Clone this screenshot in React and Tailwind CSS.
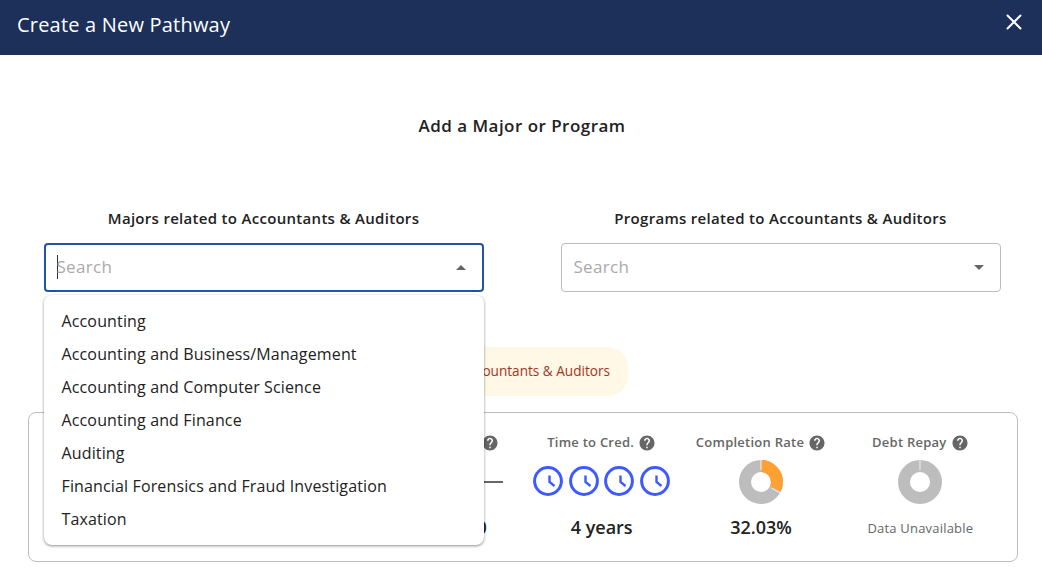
import { X } from 'lucide-react';
import { MdHelp } from 'react-icons/md';

const majors = [
  'Accounting',
  'Accounting and Business/Management',
  'Accounting and Computer Science',
  'Accounting and Finance',
  'Auditing',
  'Financial Forensics and Fraud Investigation',
  'Taxation',
];

function Clock() {
  return (
    <svg width="32" height="32" viewBox="0 0 32 32" fill="none" stroke="#3d5afe" strokeWidth="3">
      <circle cx="16" cy="16" r="13.4" />
      <path d="M17.5 10.5 V17 L22.5 21" strokeWidth="2.4" />
    </svg>
  );
}

function Donut({ percent }) {
  // ring drawn with a thick stroke, r=16 so the hole is about 10px
  const r = 16;
  const len = 2 * Math.PI * r;
  return (
    <svg width="44" height="44" viewBox="0 0 44 44" fill="none" strokeWidth="12">
      <circle cx="22" cy="22" r={r} stroke="#bdbdbd" />
      {percent > 0 && (
        <circle
          cx="22"
          cy="22"
          r={r}
          stroke="#ffa033"
          strokeDasharray={`${(len * percent) / 100} ${len}`}
          transform="rotate(-90 22 22)"
        />
      )}
      <path d="M22 0 V10" stroke="#f2f2f2" strokeWidth="1" />
      {percent > 0 && <path d="M32.4 28 L41.8 33.2" stroke="#f2f2f2" strokeWidth="1" />}
    </svg>
  );
}

function Stat({ label, children, value, note }) {
  return (
    <div className="flex flex-col items-center">
      <div className="flex items-center gap-[4px] h-[18px] text-[13px] font-semibold tracking-[0.25px] text-[#666] whitespace-nowrap">
        <span>{label}</span>
        <MdHelp className="text-[18px] text-[#666]" />
      </div>
      <div className="flex items-center justify-center h-[44px] mt-[8px]">{children}</div>
      {value && <div className="mt-[11px] text-[18px] leading-[24px] font-semibold text-[#222]">{value}</div>}
      {note && <div className="mt-[15px] text-[13px] leading-[18px] tracking-[0.2px] text-[#666]">{note}</div>}
    </div>
  );
}

function SearchBox({ label, open }) {
  return (
    <div className="relative w-[440px]">
      <div className="-mt-[1px] text-center text-[15px] leading-[20px] font-semibold text-[#222] tracking-[0.3px] mb-[15px]">{label}</div>
      <div
        className={
          open
            ? 'flex items-center justify-between h-[49px] rounded-[4px] border-2 border-[#2452a4] pl-[11px] pr-[16px]'
            : 'flex items-center justify-between h-[49px] rounded-[4px] border border-[#bdbdbd] pl-[12px] pr-[16px]'
        }
      >
        <div className="flex items-center text-[17px] tracking-[0.3px] text-[#aaa] -mt-[1px]">
          {open && <span className="w-px h-[24px] bg-[#333] -mr-px" />}
          <span>Search</span>
        </div>
        <span
          className={
            open
              ? 'w-0 h-0 border-x-[5px] border-x-transparent border-b-[5px] border-b-[#666]'
              : 'w-0 h-0 border-x-[5px] border-x-transparent border-t-[5px] border-t-[#666]'
          }
        />
      </div>
      {open && (
        <ul className="absolute z-10 left-0 right-0 top-[86px] bg-white rounded-[8px] py-[9.5px] shadow-[0_1px_3px_rgba(0,0,0,0.45)]">
          {majors.map((m) => (
            <li key={m} className="h-[33px] pl-[18px] flex items-center text-[16px] tracking-[0.14px] text-[#222]">{m}</li>
          ))}
        </ul>
      )}
    </div>
  );
}

export default function App() {
  return (
    <div className="w-[1042px] h-[580px] overflow-hidden bg-white font-['Open_Sans',sans-serif]">
      {/* Header */}
      <header className="flex items-center justify-between h-[55px] bg-[#1c3059] pl-[17px] pr-[15px] pb-[6px]">
        <h1 className="text-[20px] tracking-[0.2px] text-white">Create a New Pathway</h1>
        <X className="w-[26px] h-[26px] text-white -mt-[5px]" strokeWidth={1.8} />
      </header>

      <main className="flex flex-col items-center">
        <h2 className="mt-[58px] ml-[2px] text-[17px] leading-[26px] font-semibold text-[#222] tracking-[0.47px]">Add a Major or Program</h2>

        <div className="flex gap-[77px] mt-[70px] ml-[2px]">
          <SearchBox label="Majors related to Accountants & Auditors" open />
          <SearchBox label="Programs related to Accountants & Auditors" />
        </div>

        {/* left part of the pill is behind the open list */}
        <div className="flex items-center justify-end w-[214px] h-[49px] mt-[55px] pr-[18px] rounded-[20px] bg-[#fff8e6] text-[13.6px] text-[#a5341a]">
          Accountants &amp; Auditors
        </div>

        <div className="grid grid-cols-6 w-[990px] h-[150px] mt-[16px] ml-[4px] pl-[15px] pr-[17px] pt-[21px] rounded-[8px] border border-[#bdbdbd]">
          <div />
          <div />
          <Stat label="Median Salary" value={<span className="ml-[12px]">$100,000</span>}>
            <div className="w-[122px] h-[2px] bg-[#666]" />
          </Stat>
          <Stat label="Time to Cred." value="4 years">
            <div className="flex gap-[3.5px] -mt-[2px]">
              <Clock />
              <Clock />
              <Clock />
              <Clock />
            </div>
          </Stat>
          <Stat label="Completion Rate" value="32.03%">
            <Donut percent={32} />
          </Stat>
          <Stat label="Debt Repay" note="Data Unavailable">
            <Donut percent={0} />
          </Stat>
        </div>
      </main>
    </div>
  );
}
